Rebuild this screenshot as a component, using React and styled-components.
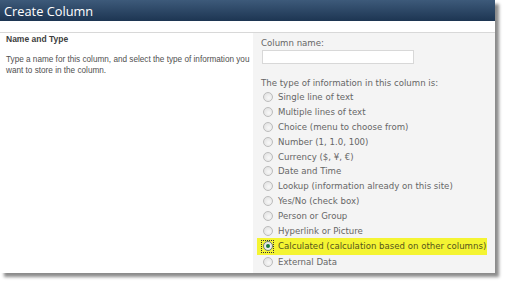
import React from "react";
import styled, { createGlobalStyle } from "styled-components";

const GlobalStyle = createGlobalStyle`
  html, body {
    margin: 0;
    padding: 0;
    background: #ffffff;
  }
`;

const Page = styled.div`
  width: 508px;
  height: 284px;
  overflow: hidden;
  background: #ffffff;
`;

const Window = styled.div`
  width: 495px;
  height: 273px;
  background: #ffffff;
  display: flex;
  flex-direction: column;
  box-shadow: 4px 4px 3px rgba(0, 0, 0, 0.45);
`;

const TitleBar = styled.div`
  height: 21px;
  flex: none;
  background: linear-gradient(#3d5a7a, #1d3552);
  color: #ffffff;
  font-family: "Open Sans", "Noto Sans", sans-serif;
  font-size: 12.8px;
  line-height: 22px;
  padding-left: 4px;
`;

const Spacer = styled.div`
  height: 11px;
  flex: none;
  border-bottom: 1px solid #d8d8d8;
`;

const Section = styled.div`
  flex: 1;
  display: flex;
`;

const Description = styled.div`
  width: 247px;
  padding: 1px 0 0 6px;
  font-family: "Liberation Sans", Arial, sans-serif;
`;

const Heading = styled.div`
  font-weight: bold;
  font-size: 8.5px;
  color: #404040;
  margin-bottom: 10px;
`;

const Help = styled.div`
  font-size: 8.2px;
  line-height: 11px;
  color: #505050;
`;

const Panel = styled.div`
  flex: 1;
  background: #f4f4f4;
  padding: 5px 0 0 5px;
  font-family: "DejaVu Sans", Verdana, sans-serif;
  font-size: 8.6px;
  color: #666666;
`;

const Label = styled.div`
  padding-left: 3px;
  line-height: 11px;
`;

const NameInput = styled.div`
  width: 150px;
  height: 12px;
  margin: 1px 0 0 4px;
  background: #ffffff;
  border: 1px solid #d8d8d8;
`;

const TypeLabel = styled(Label)`
  margin-top: 14px;
  margin-bottom: 1px;
`;

const Options = styled.div`
  display: flex;
  flex-direction: column;
`;

const Option = styled.div`
  height: ${(p) => (p.highlight ? "17px" : "14.8px")};
  flex: none;
  display: flex;
  align-items: center;
  gap: 5px;
  padding-left: ${(p) => (p.highlight ? "5px" : "4px")};
  margin-left: ${(p) => (p.highlight ? "-1px" : "0")};
  width: 225px;
  background: ${(p) => (p.highlight ? "#f4f432" : "transparent")};
  color: ${(p) => (p.highlight ? "#55551c" : "#666666")};
`;

const RadioBox = styled.span`
  width: 11px;
  height: 11px;
  display: flex;
  align-items: center;
  justify-content: center;
  outline: ${(p) => (p.focused ? "1px dotted #333" : "none")};
`;

const Radio = styled.span`
  width: 8px;
  height: 8px;
  border-radius: 50%;
  border: 1px solid ${(p) => (p.checked ? "#6f7f6f" : "#bcbcbc")};
  background: radial-gradient(circle at 60% 60%, #f8f8f8, #dcdcdc);
  display: flex;
  align-items: center;
  justify-content: center;
`;

const Dot = styled.span`
  width: 4px;
  height: 4px;
  border-radius: 50%;
  background: #1c7a3a;
`;

const types = [
  "Single line of text",
  "Multiple lines of text",
  "Choice (menu to choose from)",
  "Number (1, 1.0, 100)",
  "Currency ($, ¥, €)",
  "Date and Time",
  "Lookup (information already on this site)",
  "Yes/No (check box)",
  "Person or Group",
  "Hyperlink or Picture",
  "Calculated (calculation based on other columns)",
  "External Data",
];

export default function App() {
  const selected = "Calculated (calculation based on other columns)";
  return (
    <Page>
      <GlobalStyle />
      <Window>
        <TitleBar>Create Column</TitleBar>
        <Spacer />
        <Section>
          <Description>
            <Heading>Name and Type</Heading>
            <Help>
              Type a name for this column, and select the type of information you
              <br />
              want to store in the column.
            </Help>
          </Description>
          <Panel>
            <Label>Column name:</Label>
            <NameInput />
            <TypeLabel>The type of information in this column is:</TypeLabel>
            <Options>
              {types.map((t) => {
                const on = t === selected;
                return (
                  <Option key={t} highlight={on}>
                    <RadioBox focused={on}>
                      <Radio checked={on}>{on && <Dot />}</Radio>
                    </RadioBox>
                    {t}
                  </Option>
                );
              })}
            </Options>
          </Panel>
        </Section>
      </Window>
    </Page>
  );
}
